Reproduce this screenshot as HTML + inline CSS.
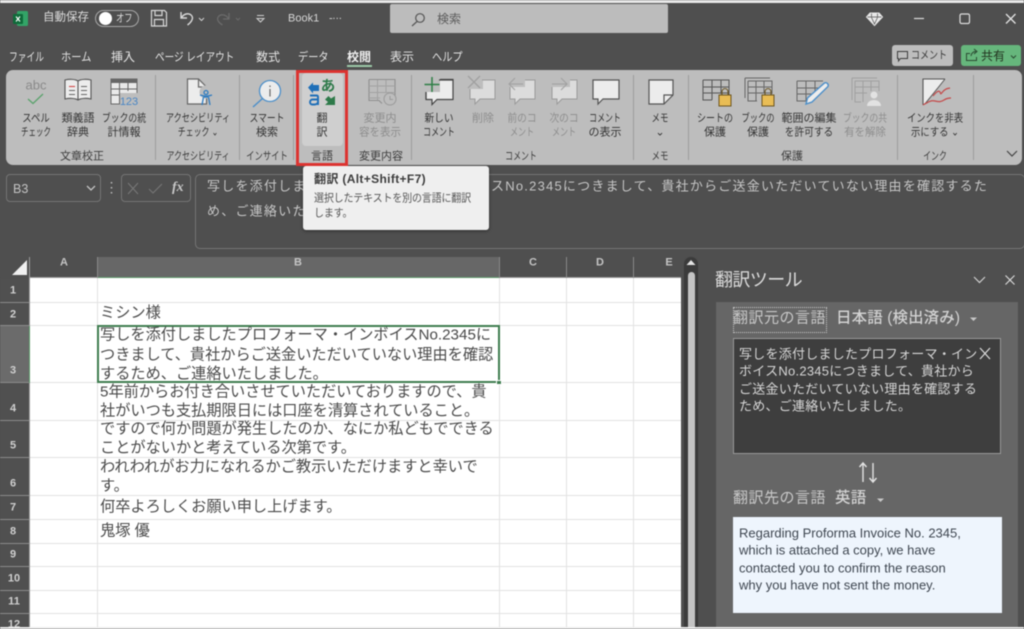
<!DOCTYPE html>
<html lang="ja">
<head>
<meta charset="utf-8">
<title>Book1 - Excel</title>
<style>
html,body{margin:0;padding:0;width:1024px;height:629px;overflow:hidden;background:#4f4f4f}
body{position:relative;font-family:"Liberation Sans","Noto Sans CJK JP",sans-serif;}
#w{position:absolute;left:0;top:0;width:1024px;height:629px;overflow:hidden;filter:blur(.45px)}
.a,.t,.c,.m{position:absolute}
.t,.c,.m{white-space:nowrap;line-height:1}
.c{transform:translate(-50%,-50%) scaleX(var(--k,1))}
.m{transform:translateY(-50%) scaleX(var(--k,1));transform-origin:left center}
.tab{font-size:12px;color:#e4e4e4}
.r{font-size:11px;color:#333;margin-top:1.5px}
.d{color:#8d8d8d}
.g{font-size:11px;color:#3c3c3c;margin-top:1.5px}
.sep{position:absolute;width:1px;top:75px;height:85px;background:#9c9c9c}
.hl{position:absolute;height:1px;background:#e2e2e2}
.vl{position:absolute;width:1px;top:278px;height:349px;background:#e2e2e2}
.rh{position:absolute;left:0;width:29px;background:#505050;border-bottom:1px solid #8a8a8a;box-sizing:border-box}
.rn{font-size:11px;font-weight:bold;color:#cfcfcf}
.ch{font-size:11px;font-weight:bold;color:#c4c4c4}
.cell{font-size:15.2px;color:#4a4a4a;left:100px}
.src{font-size:13px;color:#d6d6d6;left:739px;letter-spacing:.25px}
.tgt{font-size:13px;color:#3e4650;left:739px}
.lab{font-size:15px;color:#c9c9c9;letter-spacing:.5px}
</style>
</head>
<body>
<div id="w">
<!-- top strip -->
<div class="a" style="left:0;top:0;width:1024px;height:3px;background:#e8e8e8"></div>

<!-- title bar -->
<div class="a" style="left:390px;top:4px;width:278px;height:29px;background:#bcbcbc;border-radius:2px"></div>
<div class="m" style="left:43px;top:18px;font-size:11.500px;color:#dcdcdc">自動保存</div>
<div class="a" style="left:95px;top:10px;width:44px;height:17px;border:1px solid #a8a8a8;border-radius:9px;box-sizing:border-box"></div>
<div class="a" style="left:99px;top:12px;width:13px;height:13px;border-radius:50%;background:#fff"></div>
<div class="m" style="left:116px;top:19px;font-size:11px;color:#dcdcdc;--k:.75">オフ</div>
<div class="m" style="left:288px;top:19px;font-size:11px;color:#d6d6d6">Book1</div>
<div class="m" style="left:329px;top:19px;font-size:11px;color:#d6d6d6;letter-spacing:-.5px">-···</div>
<div class="m" style="left:437px;top:19px;font-size:12px;color:#5c5c5c">検索</div>

<!-- tabs -->
<div class="m tab" style="left:9px;top:57px;--k:.73">ファイル</div>
<div class="m tab" style="left:61px;top:57px;--k:.85">ホーム</div>
<div class="m tab" style="left:111px;top:57px">挿入</div>
<div class="m tab" style="left:155px;top:57px;--k:.8">ページ レイアウト</div>
<div class="m tab" style="left:256px;top:57px">数式</div>
<div class="m tab" style="left:298px;top:57px;--k:.85">データ</div>
<div class="m tab" style="left:347px;top:57px;font-weight:bold;color:#f0f0f0">校閲</div>
<div class="m tab" style="left:390px;top:57px">表示</div>
<div class="m tab" style="left:432px;top:57px;--k:.85">ヘルプ</div>
<div class="a" style="left:347px;top:65px;width:25px;height:2px;background:#9cc9a8"></div>

<!-- buttons right -->
<div class="a" style="left:892px;top:45px;width:61px;height:21px;background:#bdbdbd;border-radius:3px"></div>
<div class="m" style="left:911px;top:56px;font-size:11px;color:#3a3a3a;--k:.82">コメント</div>
<div class="a" style="left:961px;top:45px;width:60px;height:21px;background:#66b67c;border-radius:3px"></div>
<div class="m" style="left:981px;top:56px;font-size:12px;color:#22331f">共有</div>

<!-- ribbon -->
<div class="a" style="left:6px;top:70px;width:1016px;height:95px;background:#bdbdbd;border-radius:7px"></div>
<div class="a" style="left:302px;top:73px;width:41px;height:73px;background:#cfcfcf;border-radius:4px"></div>
<div class="sep" style="left:155px"></div>
<div class="sep" style="left:239px"></div>
<div class="sep" style="left:293px"></div>
<div class="sep" style="left:411px"></div>
<div class="sep" style="left:633px"></div>
<div class="sep" style="left:688px"></div>
<div class="sep" style="left:897px"></div>
<div class="sep" style="left:973px"></div>

<div class="c" style="left:36px;top:85px;font-size:13px;color:#8a8a8a">abc</div>

<div class="c r" style="left:36px;top:117px;--k:.85">スペル</div><div class="c r" style="left:36px;top:131px;--k:.68">チェック</div>
<div class="c r" style="left:78px;top:117px">類義語</div><div class="c r" style="left:78px;top:131px">辞典</div>
<div class="c r" style="left:124px;top:117px;--k:.8">ブックの統</div><div class="c r" style="left:124px;top:131px">計情報</div>
<div class="c r" style="left:198px;top:117px;--k:.74">アクセシビリティ</div><div class="c r" style="left:198px;top:131px;--k:.72">チェック ⌄</div>
<div class="c r" style="left:267px;top:117px;--k:.8">スマート</div><div class="c r" style="left:267px;top:131px">検索</div>
<div class="c r" style="left:322px;top:117px">翻</div><div class="c r" style="left:322px;top:131px">訳</div>
<div class="c r d" style="left:380px;top:117px">変更内</div><div class="c r d" style="left:380px;top:131px;--k:.95">容を表示</div>
<div class="c r" style="left:439px;top:117px;--k:.88">新しい</div><div class="c r" style="left:439px;top:131px;--k:.72">コメント</div>
<div class="c r d" style="left:483px;top:117px">削除</div>
<div class="c r d" style="left:522px;top:117px;--k:.88">前のコ</div><div class="c r d" style="left:522px;top:131px;--k:.73">メント</div>
<div class="c r d" style="left:564px;top:117px;--k:.88">次のコ</div><div class="c r d" style="left:564px;top:131px;--k:.73">メント</div>
<div class="c r" style="left:605px;top:117px;--k:.72">コメント</div><div class="c r" style="left:605px;top:131px">の表示</div>
<div class="c r" style="left:660px;top:117px;--k:.77">メモ</div><div class="c r" style="left:660px;top:131px">⌄</div>
<div class="c r" style="left:715px;top:117px;--k:.82">シートの</div><div class="c r" style="left:715px;top:131px">保護</div>
<div class="c r" style="left:758px;top:117px;--k:.75">ブックの</div><div class="c r" style="left:758px;top:131px">保護</div>
<div class="c r" style="left:809px;top:117px">範囲の編集</div><div class="c r" style="left:809px;top:131px;--k:.88">を許可する</div>
<div class="c r d" style="left:865px;top:117px;--k:.8">ブックの共</div><div class="c r d" style="left:865px;top:131px;--k:.95">有を解除</div>
<div class="c r" style="left:935px;top:117px;--k:.85">インクを非表</div><div class="c r" style="left:935px;top:131px;--k:.85">示にする ⌄</div>

<div class="c g" style="left:82px;top:155px">文章校正</div>
<div class="c g" style="left:198px;top:155px;--k:.73">アクセシビリティ</div>
<div class="c g" style="left:267px;top:155px;--k:.76">インサイト</div>
<div class="c g" style="left:322px;top:155px">言語</div>
<div class="c g" style="left:381px;top:155px">変更内容</div>
<div class="c g" style="left:521px;top:155px;--k:.72">コメント</div>
<div class="c g" style="left:660px;top:155px;--k:.77">メモ</div>
<div class="c g" style="left:792px;top:155px">保護</div>
<div class="c g" style="left:935px;top:155px;--k:.72">インク</div>

<!-- formula row -->
<div class="a" style="left:6px;top:174px;width:95px;height:28px;border:1px solid #757575;border-radius:4px;box-sizing:border-box"></div>
<div class="m" style="left:13px;top:189px;font-size:12.5px;color:#c4c4c4">B3</div>
<div class="a" style="left:121px;top:174px;width:70px;height:28px;border:1px solid #757575;border-radius:4px;box-sizing:border-box"></div>
<div class="m" style="left:172px;top:188px;font-size:14px;font-style:italic;font-weight:bold;font-family:'Liberation Serif',serif;color:#c8c8c8">fx</div>
<div class="a" style="left:195px;top:174px;width:830px;height:75px;border:1px solid #757575;border-radius:5px;box-sizing:border-box"></div>
<div class="m" style="left:207px;top:186px;font-size:13px;color:#c6c6c6;letter-spacing:1.22px">写しを添付しましたプロフォーマ・インボイスNo.2345につきまして、貴社からご送金いただいていない理由を確認するた</div>
<div class="m" style="left:207px;top:211px;font-size:13px;color:#c6c6c6;letter-spacing:1.22px">め、ご連絡いたしました。</div>

<!-- tooltip -->
<div class="a" style="left:303px;top:166px;width:186px;height:64px;background:#efefef;border-radius:3px;box-shadow:0 1px 3px rgba(0,0,0,.45)"></div>
<div class="m" style="left:314px;top:179px;font-size:12px;font-weight:bold;color:#3c3c3c;letter-spacing:.35px">翻訳 (Alt+Shift+F7)</div>
<div class="m" style="left:314px;top:199px;font-size:11px;color:#555;letter-spacing:-.2px;--k:.91">選択したテキストを別の言語に翻訳</div>
<div class="m" style="left:314px;top:214px;font-size:11px;color:#555;letter-spacing:-.2px;--k:.91">します。</div>

<!-- sheet -->
<div class="a" style="left:30px;top:278px;width:651px;height:349px;background:#fff"></div>
<div class="a" style="left:98px;top:257px;width:401px;height:21px;background:#676767"></div>
<div class="a" style="left:98px;top:277px;width:401px;height:1px;background:#5f9a6c"></div>
<div class="a" style="left:30px;top:277px;width:68px;height:1px;background:#9a9a9a"></div>
<div class="a" style="left:499px;top:277px;width:182px;height:1px;background:#9a9a9a"></div>
<div class="a" style="left:97px;top:257px;width:1px;height:21px;background:#8a8a8a"></div>
<div class="a" style="left:499px;top:257px;width:1px;height:21px;background:#8a8a8a"></div>
<div class="a" style="left:566px;top:257px;width:1px;height:21px;background:#8a8a8a"></div>
<div class="a" style="left:633px;top:257px;width:1px;height:21px;background:#8a8a8a"></div>
<div class="c ch" style="left:64px;top:263px">A</div>
<div class="c ch" style="left:298px;top:263px">B</div>
<div class="c ch" style="left:533px;top:263px">C</div>
<div class="c ch" style="left:600px;top:263px">D</div>
<div class="c ch" style="left:669px;top:263px">E</div>

<div class="vl" style="left:97px"></div>
<div class="vl" style="left:499px"></div>
<div class="vl" style="left:566px"></div>
<div class="vl" style="left:633px"></div>
<div class="hl" style="left:30px;top:302px;width:651px"></div>
<div class="hl" style="left:30px;top:325px;width:651px"></div>
<div class="hl" style="left:30px;top:382px;width:651px"></div>
<div class="hl" style="left:30px;top:420px;width:651px"></div>
<div class="hl" style="left:30px;top:457px;width:651px"></div>
<div class="hl" style="left:30px;top:495px;width:651px"></div>
<div class="hl" style="left:30px;top:519px;width:651px"></div>
<div class="hl" style="left:30px;top:543px;width:651px"></div>
<div class="hl" style="left:30px;top:566px;width:651px"></div>
<div class="hl" style="left:30px;top:590px;width:651px"></div>
<div class="hl" style="left:30px;top:613px;width:651px"></div>

<!-- row headers -->
<div class="rh" style="top:278px;height:25px"></div>
<div class="rh" style="top:303px;height:23px"></div>
<div class="rh" style="top:326px;height:57px;background:#6b6b6b"></div>
<div class="rh" style="top:383px;height:38px"></div>
<div class="rh" style="top:421px;height:37px"></div>
<div class="rh" style="top:458px;height:38px"></div>
<div class="rh" style="top:496px;height:24px"></div>
<div class="rh" style="top:520px;height:24px"></div>
<div class="rh" style="top:544px;height:23px"></div>
<div class="rh" style="top:567px;height:24px"></div>
<div class="rh" style="top:591px;height:23px"></div>
<div class="rh" style="top:614px;height:15px;border:0"></div>
<div class="a" style="left:29px;top:278px;width:1px;height:349px;background:#9a9a9a"></div>
<div class="a" style="left:29px;top:326px;width:1px;height:57px;background:#5f9a6c"></div>
<div class="c rn" style="left:13px;top:291px">1</div>
<div class="c rn" style="left:13px;top:315px">2</div>
<div class="c rn" style="left:13px;top:371px">3</div>
<div class="c rn" style="left:13px;top:409px">4</div>
<div class="c rn" style="left:13px;top:446px">5</div>
<div class="c rn" style="left:13px;top:484px">6</div>
<div class="c rn" style="left:13px;top:508px">7</div>
<div class="c rn" style="left:13px;top:532px">8</div>
<div class="c rn" style="left:13px;top:555px">9</div>
<div class="c rn" style="left:14px;top:579px">10</div>
<div class="c rn" style="left:14px;top:602px">11</div>
<div class="c rn" style="left:14px;top:625px">12</div>

<!-- selection -->
<div class="a" style="left:97px;top:325px;width:403px;height:58px;border:2px solid #3f7d50;box-sizing:border-box"></div>
<div class="a" style="left:496px;top:380px;width:6px;height:5px;background:#3f7d50;border:1px solid #fff;box-sizing:border-box"></div>

<!-- cell text -->
<div class="m cell" style="top:313px">ミシン様</div>
<div class="m cell" style="top:335px">写しを添付しましたプロフォーマ・インボイスNo.2345に</div>
<div class="m cell" style="top:354.5px">つきまして、貴社からご送金いただいていない理由を確認</div>
<div class="m cell" style="top:373.5px">するため、ご連絡いたしました。</div>
<div class="m cell" style="top:392px">5年前からお付き合いさせていただいておりますので、貴</div>
<div class="m cell" style="top:411px">社がいつも支払期限日には口座を清算されていること。</div>
<div class="m cell" style="top:429px">ですので何か問題が発生したのか、なにか私どもでできる</div>
<div class="m cell" style="top:448px">ことがないかと考えている次第です。</div>
<div class="m cell" style="top:467px">われわれがお力になれるかご教示いただけますと幸いで</div>
<div class="m cell" style="top:486px">す。</div>
<div class="m cell" style="top:507px">何卒よろしくお願い申し上げます。</div>
<div class="m cell" style="top:531px">鬼塚 優</div>

<!-- scrollbar -->
<div class="a" style="left:684px;top:257px;width:14px;height:372px;background:#3b3b3b;border-radius:7px 7px 0 0"></div>
<div class="a" style="left:688px;top:272px;width:7px;height:357px;background:#c4c4c4;border-radius:4px 4px 0 0"></div>

<!-- pane -->
<div class="m" style="left:715px;top:280px;font-size:18px;color:#dcdcdc;letter-spacing:-.6px">翻訳ツール</div>
<div class="a" style="left:716px;top:302px;width:302px;height:325px;background:#666"></div>
<div class="a" style="left:733px;top:307px;width:94px;height:26px;border:1px dotted #c8c8c8;box-sizing:border-box"></div>
<div class="m lab" style="left:733px;top:318px">翻訳元の言語</div>
<div class="m lab" style="left:836px;top:318px;font-weight:500;letter-spacing:.1px;font-size:15.500px;color:#d2d2d2">日本語 (検出済み)</div>
<div class="a" style="left:733px;top:338px;width:268px;height:116px;background:#3e3e3e;border:1px solid #999;box-sizing:border-box"></div>
<div class="m src" style="top:354px">写しを添付しましたプロフォーマ・イン</div>
<div class="m src" style="top:371px">ボイスNo.2345につきまして、貴社から</div>
<div class="m src" style="top:389px">ご送金いただいていない理由を確認する</div>
<div class="m src" style="top:406px">ため、ご連絡いたしました。</div>
<div class="m lab" style="left:733px;top:498px">翻訳先の言語</div>
<div class="m lab" style="left:835px;top:498px;font-weight:500;letter-spacing:.2px;font-size:15.500px;color:#d2d2d2">英語</div>
<div class="a" style="left:733px;top:517px;width:269px;height:96px;background:#eef5fd"></div>
<div class="m tgt" style="top:533px">Regarding Proforma Invoice No. 2345,</div>
<div class="m tgt" style="top:550px">which is attached a copy, we have</div>
<div class="m tgt" style="top:568px">contacted you to confirm the reason</div>
<div class="m tgt" style="top:585px">why you have not sent the money.</div>

<!-- bottom strip -->
<div class="a" style="left:0;top:627px;width:1024px;height:2px;background:#ededed"></div>

<!-- red highlight -->
<div class="a" style="left:296px;top:70px;width:52px;height:96px;border:3px solid #dc3330;box-sizing:border-box"></div>

<!-- icons -->
<svg class="a" style="left:0;top:0" width="1024" height="629" viewBox="0 0 1024 629" fill="none">
<!-- excel -->
<rect x="17" y="11" width="11" height="15" rx="1.5" fill="#33a467"/>
<rect x="13" y="14" width="10" height="10" rx="1" fill="#0f6b3a"/>
<path d="M16 16.500l4 5M20 16.500l-4 5" stroke="#fff" stroke-width="1.100"/>
<!-- save -->
<path d="M151.500 10.500h13l2 2v13.500h-15zM155 10.500v5h7v-5M154.500 26v-6.500h9V26" stroke="#d8d8d8" stroke-width="1.200"/>
<!-- undo -->
<path d="M181 12v6h6M181.500 17.500c3-4.500 8-4.500 10-2 2.500 3-.5 7-4 9.500" stroke="#d8d8d8" stroke-width="1.400"/>
<path d="M199 18l2.500 2.500 2.500-2.500" stroke="#d0d0d0" stroke-width="1"/>
<!-- redo -->
<path d="M229 13v6h-6M228.500 18.500c-3-4.500-8-4.500-10-2-2.500 3 .5 6.500 4 8.500" stroke="#6b6b6b" stroke-width="1.300"/>
<path d="M236 18l2 2 2-2" stroke="#6b6b6b" stroke-width="1"/>
<!-- customize -->
<path d="M257 15.500h7M257 18.500l3.500 3.500 3.500-3.500z" stroke="#d0d0d0" stroke-width="1"/>
<!-- search -->
<circle cx="420" cy="18" r="4.300" stroke="#555" stroke-width="1.200"/><path d="M417 21.500l-5 4.500" stroke="#555" stroke-width="1.200"/>
<!-- diamond -->
<path d="M870 13h9l3.500 4-8 8.500-8-8.500z" fill="#e8e8e8" stroke="#e8e8e8"/><path d="M867.500 17h14M871.500 17.500l3 6.500 3-6.500M871.500 13.500v3.500M877.500 13.500v3.500" stroke="#4f4f4f" stroke-width=".7"/>
<!-- window controls -->
<path d="M914 18.500h10" stroke="#ddd" stroke-width="1.200"/>
<rect x="960" y="14" width="9.500" height="9.500" rx="1.500" stroke="#ddd" stroke-width="1.200"/>
<path d="M1006 14l9.500 9.500M1015.500 14l-9.500 9.500" stroke="#e4e4e4" stroke-width="1.300"/>
<!-- comment btn icon -->
<path d="M897.500 51.500h10v7h-7l-2 2.500v-2.500h-1z" stroke="#3a3a3a" stroke-width="1"/>
<!-- share btn icon -->
<path d="M970 53.500h-3.500v7h10v-3.500M971 56c.5-3 2.500-4.500 5-4.500M974 49l3 2.500-3 2.500" stroke="#2b4a32" stroke-width="1"/>
<path d="M1011 55.500l2.500 2.500 2.500-2.500" stroke="#2b4a32" stroke-width="1"/>

<!-- spell check -->
<path d="M28 99l5 4.500 10-9.500" stroke="#5aa36c" stroke-width="1.300"/>
<!-- thesaurus -->
<path d="M78 81c-3-2-9-2-13-1v19c4-1 10-1 13 1 3-2 9-2 13-1V80c-4-1-10-1-13 1zM78 81v19" fill="#ececec" stroke="#555" stroke-width="1.100"/>
<path d="M69 86.500h6" stroke="#d04a4a" stroke-width="1.100"/><path d="M69 90.500h6M69 94.500h6M81 86.500h6M81 90.500h6M81 94.500h6" stroke="#666" stroke-width="1.100"/>
<!-- stats -->
<rect x="111" y="79" width="26" height="25" fill="#e9e9e9" stroke="#666"/><rect x="111" y="79" width="26" height="4" fill="#666"/>
<path d="M111 89h26M111 95h14M119.500 83v21M128 83v8" stroke="#666"/>
<rect x="120" y="93" width="18" height="12" fill="#bdbdbd"/>
<text x="129" y="105" text-anchor="middle" font-size="11" fill="#4a86c4" font-family="Liberation Sans">123</text>
<!-- accessibility -->
<path d="M187.500 79h11l8 8v17h-19z" fill="#ececec" stroke="#666" stroke-width="1.200"/><path d="M198.500 79v8h8" stroke="#666" stroke-width="1.200"/>
<circle cx="206" cy="92" r="6.500" fill="#bdbdbd"/>
<circle cx="206" cy="92.500" r="2" stroke="#2f7cc0" stroke-width="1.300"/>
<path d="M200 95c4 1.500 8 1.500 12 0M203.500 97l-1.500 8M208.500 97l1.500 8M203.500 97h5" stroke="#2f7cc0" stroke-width="1.300"/>
<!-- smart lookup -->
<circle cx="270" cy="91" r="10.500" fill="#ececec" stroke="#4d8fc9" stroke-width="1.300"/>
<path d="M262.500 98.500l-9.500 8.500" stroke="#4d8fc9" stroke-width="1.500"/>
<path d="M270 89v7.500M270 85.500v1.500" stroke="#666" stroke-width="1.200"/>
<!-- translate -->
<path d="M308 87.500l5-5v2.500h6v6h-6v2.500z" fill="#1f6fb8"/>
<path d="M310 95.500h6.500c1 0 1.500.7 1.500 1.500v8M318 99.500h-5.500c-3 0-3.500 5-.3 5h2.300c1.500 0 3.500-1 3.500-2.500" stroke="#1f6fb8" stroke-width="1.900"/>
<text x="328" y="91" text-anchor="middle" font-size="14.500" font-weight="bold" font-family="Noto Sans CJK JP" fill="#2e7a4a">あ</text>
<path d="M335 96v9h-10l3-3-3-2.500 3.500-3.500 2.500 2.500z" fill="#2e7a4a"/>
<!-- track changes -->
<path d="M369 79.500h26v22M369 79.500v21h10l3 3" stroke="#8f8f8f" stroke-width="1.100"/>
<path d="M369 86h26M369 92.500h26M369 98h11M377.500 80v20M386 80v12" stroke="#a2a2a2" stroke-width="1"/>
<circle cx="390" cy="99" r="6" fill="#bdbdbd" stroke="#9a9a9a"/><path d="M390 96v3.500h3" stroke="#9a9a9a"/>
<!-- new comment -->
<path d="M426 79.500h27v20h-16l-5 5v-5h-6z" fill="#ececec" stroke="#444" stroke-width="1.200"/>
<rect x="424" y="76" width="16" height="16" fill="#bdbdbd"/>
<path d="M432 77v15M424.500 84.500h15" stroke="#2f7e46" stroke-width="1.500"/>
<path d="M439 80h14M426 92v7" stroke="#444" stroke-width="1.200"/>
<!-- delete comment -->
<path d="M470 80h25v19h-15l-5 5v-5h-5z" fill="#dcdcdc" stroke="#9a9a9a"/>
<rect x="467" y="75" width="16" height="14" fill="#bdbdbd"/>
<path d="M468 76l12 12M480 76l-12 12" stroke="#a0a0a0" stroke-width="1.300"/>
<path d="M482 80h13" stroke="#9a9a9a"/>
<!-- prev comment -->
<path d="M510 80h25v19h-15l-5 5v-5h-5z" fill="#dcdcdc" stroke="#9a9a9a"/>
<rect x="507" y="76" width="18" height="11" fill="#bdbdbd"/>
<path d="M523 84h-14M515 78l-6 6 6 6" stroke="#a0a0a0" stroke-width="1"/>
<!-- next comment -->
<path d="M552 80h25v19h-15l-5 5v-5h-5z" fill="#dcdcdc" stroke="#9a9a9a"/>
<rect x="551" y="76" width="19" height="11" fill="#bdbdbd"/>
<path d="M552 84h15M561 78l6 6-6 6" stroke="#a0a0a0" stroke-width="1"/>
<!-- show comments -->
<path d="M593 80h26v19h-16l-5 5v-5h-5z" fill="#ececec" stroke="#555" stroke-width="1.200"/>
<!-- note -->
<path d="M649 80h24v15l-9 9h-15z" fill="#ececec" stroke="#555" stroke-width="1.200"/>
<path d="M673 95h-9v9" stroke="#555" stroke-width="1.200"/>
<!-- protect sheet -->
<path d="M703 80h26v17M703 80v20h9M703 87h26M703 93h26M712 80v20M721 80v14" stroke="#555" stroke-width="1"/>
<rect x="719" y="95" width="12" height="11" fill="#e9bd55" stroke="#6b5520"/>
<path d="M722 95v-3c0-4.500 6-4.500 6 0v3" stroke="#6b5520" stroke-width="1.100"/>
<!-- protect workbook -->
<path d="M745 78h25M745 78v20M748 81h24v13M748 81v20h9M748 87h24M748 93h24M756 81v20M764 81v12" stroke="#666" stroke-width="1"/>
<rect x="762" y="95" width="12" height="11" fill="#e9bd55" stroke="#6b5520"/>
<path d="M765 95v-3c0-4.500 6-4.500 6 0v3" stroke="#6b5520" stroke-width="1.100"/>
<!-- allow edit -->
<path d="M797 81h26M797 81v20h9M797 88h25M797 94h17M806 81v20M815 81v14" stroke="#666" stroke-width="1"/>
<path d="M806 104l1.500-6 17-15c2-1 4.500 1 3.500 3.500l-16 15.500z" fill="#ececec" stroke="#4d8fc9" stroke-width="1.400"/>
<!-- unshare -->
<path d="M852 78h25M852 78v22M855 81h24v10M855 81v21h6M855 87h24M855 93h12M863 81v21M871 81v10" stroke="#a0a0a0" stroke-width="1"/>
<circle cx="874" cy="95" r="3.500" fill="#e2e2e2"/><path d="M867 106c0-8 14-8 14 0z" fill="#e2e2e2"/>
<!-- ink -->
<path d="M923 79h22l-22 26z" fill="#ececec"/><path d="M923 105V79h22" stroke="#555" stroke-width="1.100"/><path d="M945 79l-20 25" stroke="#555" stroke-width="1"/>
<path d="M933 96c3-4 6-6 7-4s0 3 3-.5 5-3 7-3.500M923 105c5-3 8-5 12-4s6 1 9-1 5-2 7-2" stroke="#c44a4a" stroke-width="1.200"/>
<!-- collapse -->
<path d="M1007 151l5 5 5-5" stroke="#444" stroke-width="1.200"/>

<!-- formula row icons -->
<path d="M87 186l4 4 4-4" stroke="#c4c4c4" stroke-width="1.300"/>
<path d="M111.500 182v1.500M111.500 187v1.500M111.500 192v1.500" stroke="#bbb" stroke-width="1.500"/>
<path d="M128 183l10 11M138 183l-10 11" stroke="#777" stroke-width="1.100"/>
<path d="M149 189l4 4 9-9" stroke="#777" stroke-width="1.100"/>

<!-- sheet corner -->
<path d="M12 275h15v-15z" fill="#f0f0f0"/>
<path d="M29.500 257v21" stroke="#9a9a9a"/>
<!-- scrollbar arrow -->
<path d="M691 260l4.500 5h-9z" fill="#e4e4e4"/>
<!-- pane icons -->
<path d="M974 277l5.500 5.500 5.500-5.500" stroke="#d0d0d0" stroke-width="1.200"/>
<path d="M1005.500 275.500l9 9M1014.500 275.500l-9 9" stroke="#d8d8d8" stroke-width="1.200"/>
<path d="M970 318h7l-3.500 3.500z" fill="#c8c8c8" transform="translate(0,-.5)"/>
<path d="M877 499h7l-3.500 3.500z" fill="#c8c8c8" transform="translate(0,-.5)"/>
<path d="M980 348l10 11M990 348l-10 11" stroke="#dcdcdc" stroke-width="1.200"/>
<path d="M863 482v-19M859.500 467l3.500-4 3.500 4M873 463v19M869.500 478l3.500 4 3.500-4" stroke="#e4e4e4" stroke-width="1.400"/>
</svg>
</div>
</body>
</html>
